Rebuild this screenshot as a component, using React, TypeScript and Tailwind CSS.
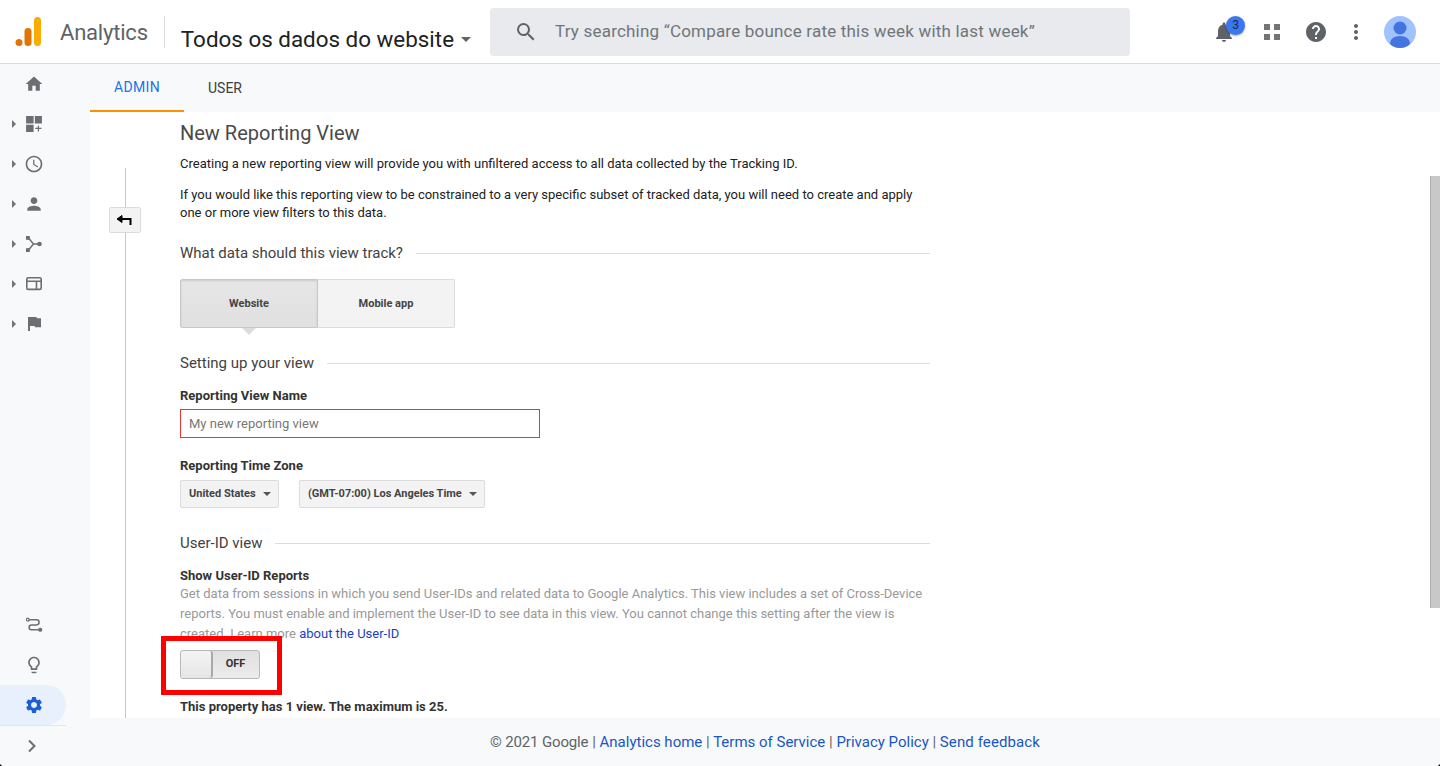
import React from "react";

const G = "#5f6368";

function Caret() {
  return <span className="w-0 h-0 border-y-[4px] border-y-transparent border-l-[4px] border-l-[#757575] absolute left-[12px] top-1/2 -translate-y-1/2" />;
}

function NavItem({ caret, children }: { caret?: boolean; children: React.ReactNode }) {
  return (
    <div className="relative h-[40px] flex items-center pl-[24px]">
      {caret && <Caret />}
      {children}
    </div>
  );
}

const Ic = ({ children, size = 20, vb = "0 0 24 24" }: { children: React.ReactNode; size?: number; vb?: string }) => (
  <svg width={size} height={size} viewBox={vb} fill="#6b6e72">{children}</svg>
);

function SectionHead({ title, className = "" }: { title: string; className?: string }) {
  return (
    <div className={"flex items-center gap-[13px] " + className}>
      <span className="text-[15px] leading-[20px] text-[#424242] whitespace-nowrap">{title}</span>
      <span className="flex-1 h-px bg-[#dcdcdc]" />
    </div>
  );
}

function Select({ label, w }: { label: string; w: string }) {
  return (
    <div className={"h-[28px] border border-[#dcdcdc] rounded-[2px] bg-[#f3f3f3] flex items-center justify-between pl-[8px] pr-[7px] text-[11px] font-bold text-[#444] " + w}>
      <span className="whitespace-nowrap">{label}</span>
      <span className="w-0 h-0 border-x-[4px] border-x-transparent border-t-[4px] border-t-[#555]" />
    </div>
  );
}

export default function App() {
  return (
    <div className="w-[1440px] h-[766px] bg-black">
      <div className="w-[1440px] h-[766px] overflow-hidden rounded-b-[4px] flex flex-col bg-white font-['Roboto',sans-serif] relative">
        <header className="h-[64px] shrink-0 border-b border-[#dadce0] flex items-center bg-white">
          <svg width="28" height="32" viewBox="0 0 28 32" className="ml-[14px]">
            <rect x="20" y="1" width="7" height="29" rx="3.5" fill="#f9ab00" />
            <rect x="10.500" y="12" width="7" height="18" rx="3.5" fill="#e37400" />
            <circle cx="5" cy="26.5" r="3.5" fill="#e37400" />
          </svg>
          <span className="ml-[18px] mt-[2px] text-[22px] tracking-[-0.2px] text-[#5f6368] leading-none">Analytics</span>
          <span className="ml-[16px] w-px h-[32px] bg-[#dadce0]" />
          <span className="ml-[16px] text-[22.4px] text-[#202124] leading-none mt-[15px] whitespace-nowrap">Todos os dados do website</span>
          <span className="ml-[7px] mt-[15px] w-0 h-0 border-x-[5px] border-x-transparent border-t-[5px] border-t-[#5f6368]" />
          <div className="ml-[19px] w-[640px] h-[48px] rounded-[4px] bg-[#e8eaed] flex items-center pl-[24px]">
            <svg width="24" height="24" viewBox="0 0 24 24" fill={G}><path d="M15.5 14h-.79l-.28-.27A6.47 6.47 0 0 0 16 9.5 6.5 6.5 0 1 0 9.5 16c1.61 0 3.09-.59 4.23-1.57l.27.28v.79l5 4.99L20.49 19l-4.99-5zm-6 0C7.01 14 5 11.99 5 9.5S7.01 5 9.5 5 14 7.01 14 9.5 11.99 14 9.5 14z" /></svg>
            <span className="ml-[17px] text-[17px] tracking-[0.2px] text-[#70757a] whitespace-nowrap">Try searching “Compare bounce rate this week with last week”</span>
          </div>
          <div className="flex-1" />
          <div className="relative w-[24px] h-[24px] mr-[24px]">
            <svg width="24" height="24" viewBox="0 0 24 24" fill={G}><path d="M12 22c1.1 0 2-.9 2-2h-4c0 1.1.9 2 2 2zm6-6v-5c0-3.07-1.63-5.64-4.5-6.32V4c0-.83-.67-1.5-1.5-1.5s-1.5.67-1.5 1.5v.68C7.64 5.36 6 7.92 6 11v5l-2 2v1h16v-1l-2-2z" /></svg>
            <span className="absolute left-[14px] top-[-4px] w-[19px] h-[19px] rounded-full bg-[#3b78f0] text-[12px] text-[#1a2a4a] flex items-center justify-center shadow-[0_1px_2px_rgba(0,0,0,0.35)]">3</span>
          </div>
          <div className="w-[24px] h-[24px] mr-[20px] grid grid-cols-2 gap-[4px] p-[4px]">
            <span className="bg-[#757575]" /><span className="bg-[#757575]" /><span className="bg-[#757575]" /><span className="bg-[#757575]" />
          </div>
          <svg width="24" height="24" viewBox="0 0 24 24" fill={G} className="mr-[16px]"><path d="M12 2C6.48 2 2 6.48 2 12s4.48 10 10 10 10-4.48 10-10S17.52 2 12 2zm1 17h-2v-2h2v2zm2.07-7.75l-.9.92C13.45 12.9 13 13.5 13 15h-2v-.5c0-1.1.45-2.1 1.17-2.83l1.24-1.26c.37-.36.59-.86.59-1.41 0-1.1-.9-2-2-2s-2 .9-2 2H8c0-2.21 1.79-4 4-4s4 1.79 4 4c0 .88-.36 1.68-.93 2.25z" /></svg>
          <svg width="24" height="24" viewBox="0 0 24 24" fill={G} className="mr-[16px]"><path d="M12 8c1.1 0 2-.9 2-2s-.9-2-2-2-2 .9-2 2 .9 2 2 2zm0 2c-1.1 0-2 .9-2 2s.9 2 2 2 2-.9 2-2-.9-2-2-2zm0 6c-1.1 0-2 .9-2 2s.9 2 2 2 2-.9 2-2-.9-2-2-2z" /></svg>
          <svg width="32" height="32" viewBox="0 0 32 32" className="mr-[24px]">
            <defs><clipPath id="av"><circle cx="16" cy="16" r="16" /></clipPath></defs>
            <g clipPath="url(#av)">
              <rect width="32" height="32" fill="#a0c3ff" />
              <circle cx="16" cy="12" r="6.500" fill="#4374e0" />
              <ellipse cx="16" cy="27" rx="10" ry="7" fill="#4374e0" />
            </g>
          </svg>
        </header>

        <div className="flex-1 flex min-h-0">
          <aside className="w-[90px] shrink-0 bg-[#f8f9fa] flex flex-col">
            <NavItem><Ic><path d="M10 20v-6h4v6h5v-8h3L12 3 2 12h3v8z" /></Ic></NavItem>
            <NavItem caret><Ic><path d="M2.500 2.500h9v9h-9zM13 2.500h8.500v9H13zM2.500 13h9v8.500h-9zM16.500 14h1.500v2.500h3V18h-3v3h-1.500v-3h-3v-1.500h3z" /></Ic></NavItem>
            <NavItem caret><Ic><path d="M11.990 2C6.470 2 2 6.480 2 12s4.470 10 9.990 10C17.520 22 22 17.520 22 12S17.520 2 11.990 2zM12 20c-4.420 0-8-3.580-8-8s3.580-8 8-8 8 3.580 8 8-3.580 8-8 8zm.5-13H11v6l5.250 3.150.75-1.230-4.500-2.670z" /></Ic></NavItem>
            <NavItem caret><Ic><path d="M12 12c2.210 0 4-1.790 4-4s-1.790-4-4-4-4 1.790-4 4 1.790 4 4 4zm0 2c-2.670 0-8 1.340-8 4v2h16v-2c0-2.660-5.330-4-8-4z" /></Ic></NavItem>
            <NavItem caret>
              <svg width="20" height="20" viewBox="0 0 20 20" fill="#6b6e72" stroke="#6b6e72">
                <rect x="2" y="2" width="3.800" height="3.800" strokeWidth="0" />
                <rect x="2" y="14.200" width="3.800" height="3.800" strokeWidth="0" />
                <circle cx="15.500" cy="10" r="2.300" strokeWidth="0" />
                <path d="M4.500 4l5 6-5 6M9.500 10H15" fill="none" strokeWidth="1.500" />
              </svg>
            </NavItem>
            <NavItem caret>
              <svg width="20" height="20" viewBox="0 0 20 20" fill="none" stroke="#6b6e72" strokeWidth="1.600">
                <rect x="2.800" y="3.800" width="14.400" height="11.600" rx="1.500" />
                <path d="M3 7.200h14M12.500 7.200v8" />
              </svg>
            </NavItem>
            <NavItem caret>
              <svg width="20" height="20" viewBox="0 0 20 20" fill="#6b6e72"><path d="M4 3h8.500l.4 1.300H17v9h-6l-.4-1.300H6V17H4z" /></svg>
            </NavItem>
            <div className="flex-1" />
            <NavItem><Ic><path d="M4.500 3a2.500 2.500 0 0 1 2.400 1.800H15a4 4 0 0 1 0 8H9a2 2 0 0 0 0 4h8.100a2.500 2.500 0 1 1 0 1.800H9a3.800 3.800 0 0 1 0-7.600h6a2.200 2.200 0 0 0 0-4.400H6.900A2.500 2.500 0 1 1 4.500 3zm0 1.500a1 1 0 1 0 0 2 1 1 0 0 0 0-2z" /></Ic></NavItem>
            <NavItem><Ic><path d="M9 21c0 .55.45 1 1 1h4c.55 0 1-.45 1-1v-1H9v1zm3-19C8.140 2 5 5.140 5 9c0 2.380 1.190 4.470 3 5.740V17c0 .55.45 1 1 1h6c.55 0 1-.45 1-1v-2.260c1.810-1.270 3-3.360 3-5.740 0-3.860-3.140-7-7-7zm2.850 11.100l-.85.6V16h-4v-2.300l-.85-.6A4.997 4.997 0 0 1 7 9c0-2.760 2.240-5 5-5s5 2.240 5 5c0 1.630-.8 3.160-2.150 4.100z" /></Ic></NavItem>
            <div className="h-[40px] w-[66px] rounded-r-[20px] bg-[#e8f0fe] flex items-center pl-[24px]">
              <svg width="20" height="20" viewBox="0 0 24 24" fill="#1a5fd8"><path d="M19.140 12.940c.04-.3.060-.61.060-.94 0-.32-.020-.64-.070-.94l2.030-1.580a.49.49 0 0 0 .12-.61l-1.920-3.320a.488.488 0 0 0-.59-.22l-2.390.96c-.5-.38-1.030-.7-1.620-.94l-.36-2.540a.484.484 0 0 0-.48-.41h-3.840c-.24 0-.43.170-.47.410l-.36 2.540c-.59.240-1.130.570-1.620.94l-2.390-.96c-.22-.080-.47 0-.59.220L2.740 8.870c-.12.210-.08.470.12.610l2.030 1.580c-.05.300-.09.630-.09.940s.02.640.07.940l-2.030 1.580a.49.49 0 0 0-.12.610l1.920 3.320c.12.220.37.290.59.220l2.390-.96c.5.380 1.030.7 1.620.94l.36 2.540c.05.240.24.410.48.410h3.840c.24 0 .44-.170.47-.410l.36-2.540c.59-.240 1.130-.560 1.620-.94l2.390.96c.22.080.47 0 .59-.220l1.920-3.320c.12-.220.07-.470-.12-.610l-2.010-1.580zM12 15.600c-1.980 0-3.600-1.620-3.600-3.600s1.620-3.600 3.600-3.600 3.600 1.620 3.600 3.600-1.620 3.600-3.600 3.600z" /></svg>
            </div>
            <div className="h-px w-[66px] bg-[#e4e6e8]" />
            <div className="h-[40px] flex items-center pl-[20px]">
              <svg width="24" height="24" viewBox="0 0 24 24" fill="none" stroke="#6b6e72" strokeWidth="2"><path d="M9 6.500l5.500 5.500L9 17.500" /></svg>
            </div>
          </aside>

          <main className="flex-1 min-w-0 flex flex-col">
            <nav className="h-[48px] shrink-0 bg-[#f8f9fa] flex text-[14px]">
              <div className="w-[94px] flex items-center justify-center tracking-[0.3px] text-[#1a73e8] border-b-2 border-[#ff8f00]">ADMIN</div>
              <div className="w-[82px] flex items-center justify-center text-[#3c4043]">USER</div>
            </nav>
            <div className="flex-1 min-h-0 flex overflow-hidden relative">
              <div className="w-[90px] shrink-0 relative pt-[56px] pl-[35px]">
                <div className="w-px h-full bg-[#c8c8c8]" />
                <div className="absolute left-[19px] top-[95px] w-[32px] h-[26px] border border-[#dcdcdc] rounded-[2px] bg-[#f3f3f3] flex items-center justify-center">
                  <svg width="16" height="10" viewBox="0 0 16 10" fill="none" stroke="#000" strokeWidth="2" className="-ml-[2px]"><path d="M14.500 10V4H4" /><path d="M1 4L6 .5V7.500Z" fill="#000" strokeWidth="1" /></svg>
                </div>
              </div>
              <div className="w-[750px] shrink-0 text-[13px] text-[#222]">
                <h1 className="text-[20px] leading-[24px] text-[#4a4a4a] font-normal mt-[9px]">New Reporting View</h1>
                <p className="mt-[10px] leading-[18px]">Creating a new reporting view will provide you with unfiltered access to all data collected by the Tracking ID.</p>
                <p className="mt-[13px] leading-[18px]">If you would like this reporting view to be constrained to a very specific subset of tracked data, you will need to create and apply<br />one or more view filters to this data.</p>
                <SectionHead title="What data should this view track?" className="mt-[21px]" />
                <div className="mt-[16px] flex w-[275px] h-[49px] relative">
                  <div className="w-[138px] pt-[1px] border border-[#c8c8c8] rounded-l-[2px] bg-gradient-to-b from-[#e6e6e6] to-[#e0e0e0] shadow-[inset_0_1px_2px_rgba(0,0,0,0.12)] flex items-center justify-center text-[11px] font-bold text-[#444]">Website</div>
                  <div className="flex-1 pt-[1px] border border-l-0 border-[#dcdcdc] rounded-r-[2px] bg-[#f3f3f3] flex items-center justify-center text-[11px] font-bold text-[#444]">Mobile app</div>
                  <span className="absolute left-[62px] top-[49px] w-0 h-0 border-x-[7px] border-x-transparent border-t-[7px] border-t-[#dcdcdc]" />
                </div>
                <SectionHead title="Setting up your view" className="mt-[25px]" />
                <div className="mt-[14px] font-bold leading-[18px] text-[#333]">Reporting View Name</div>
                <div className="mt-[4px] w-[360px] h-[29px] border border-[#e53935] flex items-center pl-[8px] text-[#777]">My new reporting view</div>
                <div className="mt-[19px] font-bold leading-[18px] text-[#333]">Reporting Time Zone</div>
                <div className="mt-[5px] flex gap-[20px]">
                  <Select label="United States" w="w-[99px]" />
                  <Select label="(GMT-07:00) Los Angeles Time" w="w-[186px]" />
                </div>
                <SectionHead title="User-ID view" className="mt-[25px]" />
                <div className="mt-[14px] font-bold leading-[17px] text-[#333]">Show User-ID Reports</div>
                <p className="leading-[20px] text-[#999]">Get data from sessions in which you send User-IDs and related data to Google Analytics. This view includes a set of Cross-Device reports. You must enable and implement the User-ID to see data in this view. You cannot change this setting after the view is created. Learn more <span className="text-[#1a3fc4]">about the User-ID</span></p>
                <div className="relative mt-[6px] w-[80px] h-[29px]">
                  <div className="absolute -left-[19px] -top-[14px] w-[121px] h-[59px] border-[5px] border-[#f00]" />
                  <div className="relative w-[80px] h-[29px] border border-[#b8b8b8] rounded-[3px] bg-gradient-to-b from-[#e0e0e0] to-[#ececec] flex">
                    <div className="w-[32px] h-full rounded-[3px] border-r-2 border-[#a8a8a8] bg-gradient-to-b from-[#f4f4f4] to-[#e6e6e6]" />
                    <div className="flex-1 pr-[1px] flex items-center justify-center text-[11px] font-bold text-[#333]">OFF</div>
                  </div>
                </div>
                <div className="mt-[19px] font-bold leading-[18px] text-[#333]">This property has 1 view. The maximum is 25.</div>
              </div>
              <div className="absolute right-0 top-[64px] w-[10px] h-[432px] bg-[#c8c8c8] border-l border-[#b0b0b0]" />
            </div>
            <footer className="h-[48px] shrink-0 bg-[#f8f9fa] flex items-center justify-center text-[15px] text-[#5f6368]">
              <span><span className="tracking-[-0.15px]">© 2021 Google</span> | <span className="text-[#1a56c4]">Analytics home</span> | <span className="text-[#1a56c4]">Terms of Service</span> | <span className="text-[#1a56c4]">Privacy Policy</span> | <span className="text-[#1a56c4] tracking-[0.1px]">Send feedback</span></span>
            </footer>
          </main>
        </div>
      </div>
    </div>
  );
}
